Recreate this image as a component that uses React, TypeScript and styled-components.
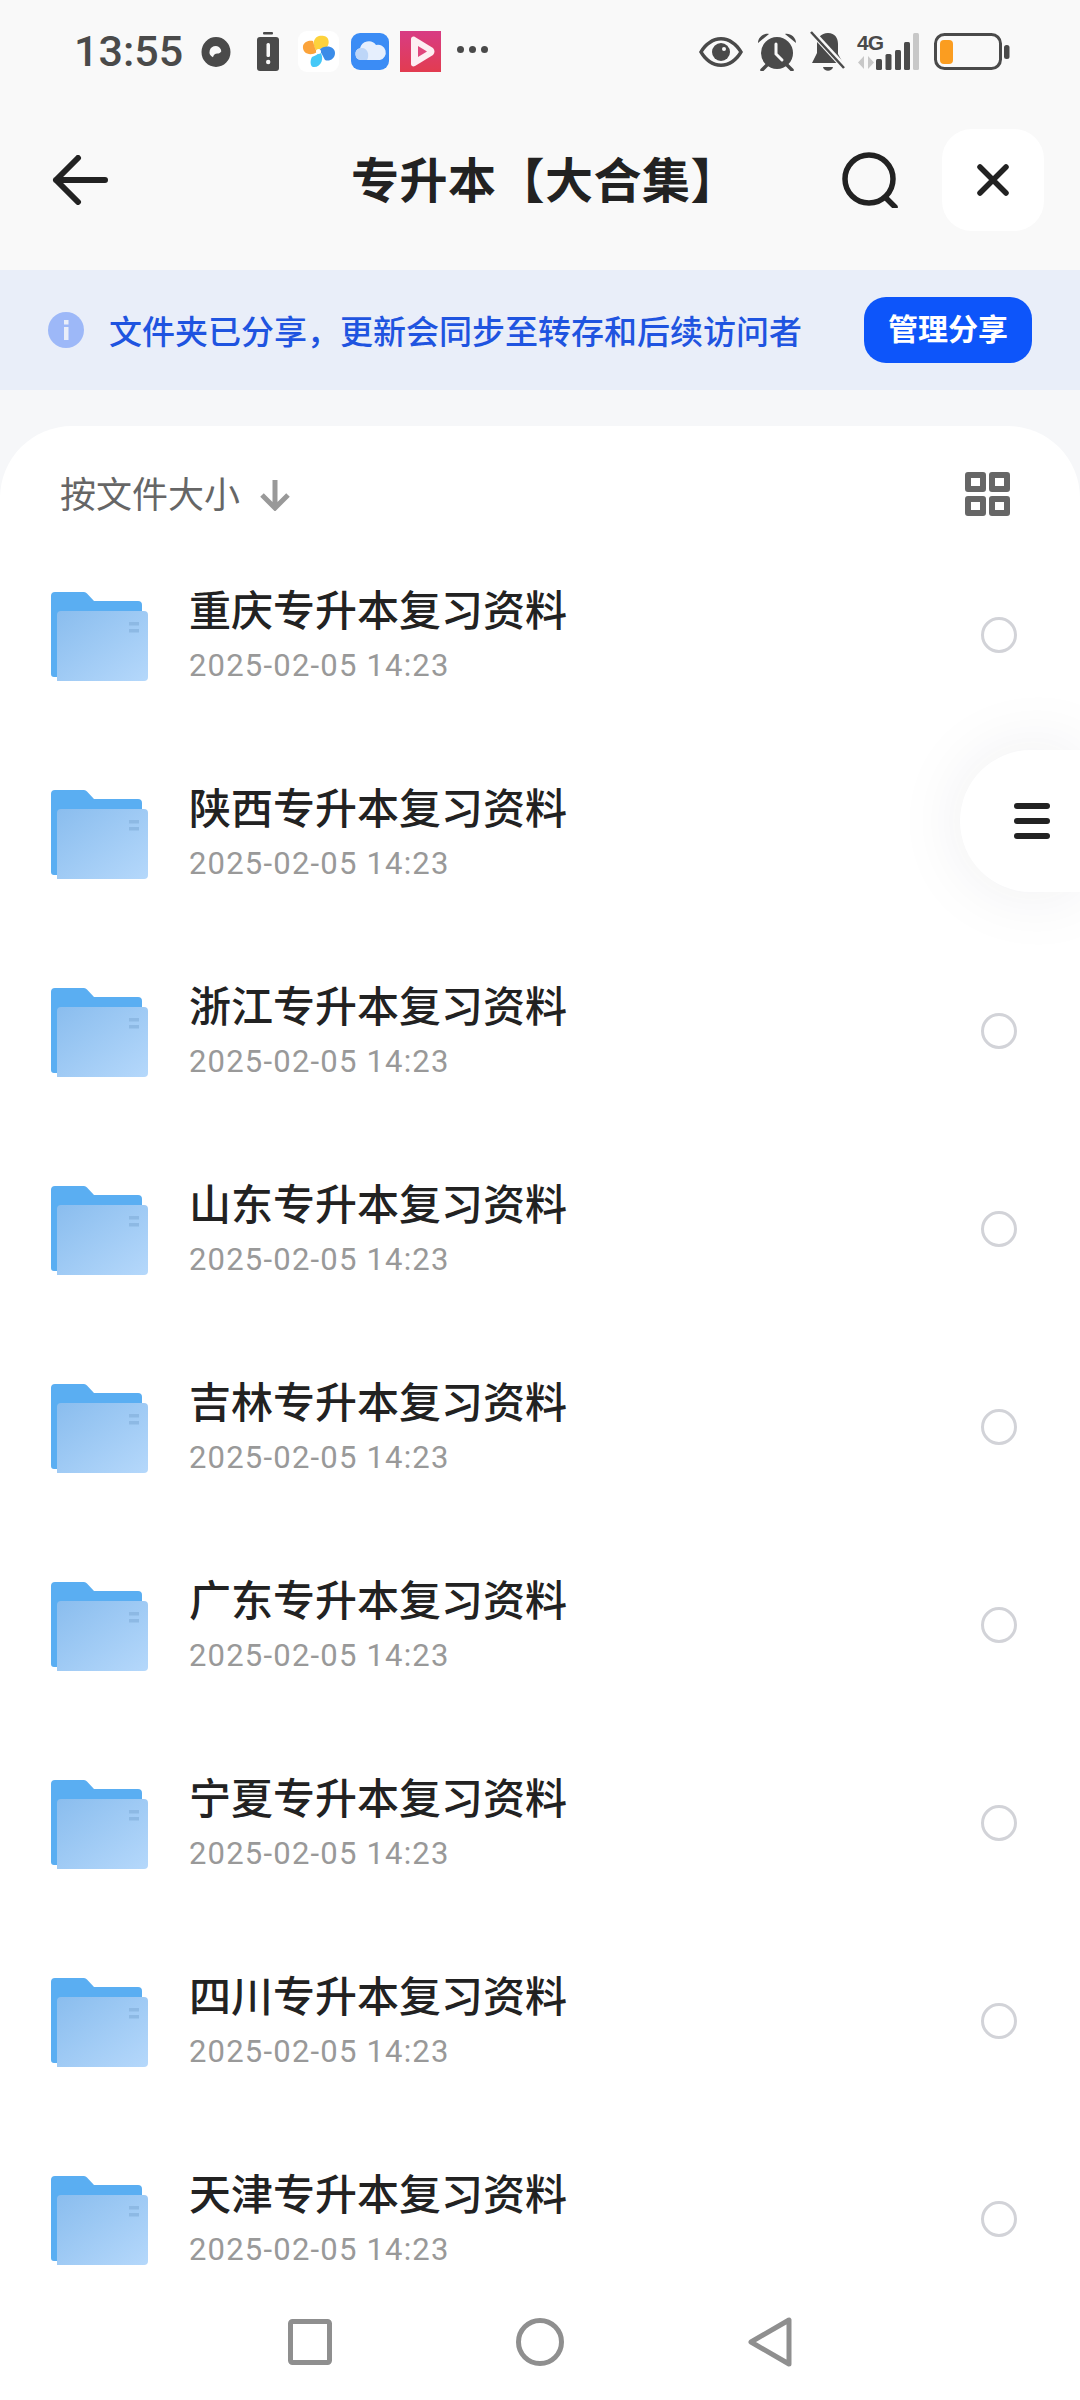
import React from "react";
import styled, { createGlobalStyle } from "styled-components";

const GlobalStyle = createGlobalStyle`
  html, body {
    margin: 0;
    padding: 0;
    background: #f9f9f9;
  }
  * {
    box-sizing: border-box;
  }
`;

const CJK = `"Noto Sans CJK SC", "Noto Sans", sans-serif`;

const provinces = ["重庆", "陕西", "浙江", "山东", "吉林", "广东", "宁夏", "四川", "天津"];

export default function App() {
  return (
    <Page>
      <GlobalStyle />
      <StatusBar>
        <StatusGroup>
          <Clock>13:55</Clock>
          <Glyph $width={30} $left={18}>
            <svg width="30" height="30" viewBox="0 0 30 30">
              <path fillRule="evenodd" fill="#4a4a4a" d="M15 0a14.500 15 0 1 1 0 30a14.500 15 0 1 1 0-30zM15 9a6.500 6 0 0 0-3 11.300c.4-2.500 2-3.800 4.500-3.800c1.500 0 3-.8 3.800-2.300A6.500 6 0 0 0 15 9z" />
            </svg>
          </Glyph>
          <Glyph $width={22} $left={26}>
            <svg width="22" height="39" viewBox="0 0 22 39">
              <rect x="6" y="0" width="10" height="2.500" rx="1" fill="#4a4a4a" />
              <rect x="0" y="5" width="22" height="34" rx="3" fill="#4a4a4a" />
              <rect x="9.500" y="11" width="3.500" height="14" rx="1.500" fill="#f9f9f9" />
              <circle cx="11.200" cy="30" r="2.200" fill="#f9f9f9" />
            </svg>
          </Glyph>
          <Glyph $width={41} $left={19}>
            <svg width="41" height="41" viewBox="0 0 41 41">
              <rect width="41" height="41" rx="9" fill="#ffffff" />
              <path d="M19 20C12 12 17 3 26 5c5 1 6 7 3 11c-3 1-7 1-10 4z" fill="#fdd23c" />
              <path d="M21 19c6-6 16-4 16 3c0 6-6 9-10 7c-2-3-3-7-6-10z" fill="#3b8ce8" />
              <path d="M22 21c5 6 1 16-7 15c-3-1-3-7-1-10c3-1 6-3 8-5z" fill="#45c8f7" />
              <path d="M19 21C12 26 4 22 5 15c1-5 7-6 10-5c1 4 2 8 4 11z" fill="#fba33a" />
              <circle cx="20.500" cy="20.500" r="2.500" fill="#ffffff" />
            </svg>
          </Glyph>
          <Glyph $width={38} $left={12}>
            <svg width="38" height="37" viewBox="0 0 38 37">
              <rect width="38" height="37" rx="9" fill="#3b8cf5" />
              <path d="M10 27a6 6 0 0 1-1-11.800A9 9 0 0 1 25 12a7.500 7.500 0 0 1 4 15z" fill="#e6effd" />
              <path d="M10 27a6 6 0 0 1-1-11.800c4-1 7 1 8 5c.5 3 0 5-1 6.800z" fill="#bdd6f8" />
            </svg>
          </Glyph>
          <Glyph $width={41} $left={11}>
            <svg width="41" height="41" viewBox="0 0 41 41">
              <defs>
                <linearGradient id="playBg" x1="0" y1="0" x2="0" y2="1">
                  <stop offset="0" stopColor="#d83c84" />
                  <stop offset="1" stopColor="#e23c50" />
                </linearGradient>
              </defs>
              <rect width="41" height="41" fill="url(#playBg)" />
              <path d="M11 8c0-2 2-3 4-2l18 11c2 2 2 5 0 7L15 35c-2 1-4 0-4-2z" fill="#fdeef2" />
              <path d="M18 15l9 5.500l-9 5.500z" fill="#e0457c" />
            </svg>
          </Glyph>
          <MoreDots>
            <i />
            <i />
            <i />
          </MoreDots>
        </StatusGroup>
        <StatusGroup>
          <Glyph $width={44} $left={0}>
            <svg width="44" height="30" viewBox="0 0 44 30">
              <path fillRule="evenodd" fill="#4a4a4a" d="M22 0c9 0 17 6 22 15c-5 9-13 15-22 15S5 24 0 15C5 6 13 0 22 0zm0 3.500c-7 0-13.500 4.500-18 11.500c4.500 7 11 11.500 18 11.500S35.500 22 40 15C35.500 8 29 3.500 22 3.500z" />
              <circle cx="22" cy="15" r="9" fill="#4a4a4a" />
              <circle cx="25" cy="12" r="2" fill="#f9f9f9" />
            </svg>
          </Glyph>
          <Glyph $width={38} $left={15}>
            <svg width="38" height="38" viewBox="0 0 38 38">
              <circle cx="19" cy="20" r="16" fill="#4a4a4a" />
              <path d="M0 10c0-6 6-10 11-9zM38 10c0-6-6-10-11-9z" fill="#4a4a4a" />
              <path d="M9 32l-5 5M29 32l5 5" stroke="#4a4a4a" strokeWidth="3.500" strokeLinecap="round" />
              <path d="M18 11v10l6 6" fill="none" stroke="#f9f9f9" strokeWidth="3" strokeLinecap="round" />
            </svg>
          </Glyph>
          <Glyph $width={36} $left={14}>
            <svg width="36" height="41" viewBox="0 0 36 41">
              <path d="M18 2c7 0 10 5 10 11v10l5 9H2l5-10V13C7 7 11 2 18 2z" fill="#4a4a4a" />
              <path d="M13 36h10c-1 5-9 5-10 0z" fill="#4a4a4a" />
              <path d="M1 0l34 37" stroke="#f9f9f9" strokeWidth="6" />
              <path d="M1 1l33 36" stroke="#4a4a4a" strokeWidth="2.500" />
            </svg>
          </Glyph>
          <NetworkIcon>
            <NetworkLabel>4G</NetworkLabel>
            <svg width="62" height="38" viewBox="0 0 62 38">
              <path d="M7 23v13l-6-6.500zM11 23l6 6.500l-6 6.500z" fill="#c8c8c8" />
              <rect x="19" y="26" width="6" height="11" rx="1.500" fill="#4a4a4a" />
              <rect x="28.500" y="21" width="6" height="16" rx="1.500" fill="#4a4a4a" />
              <rect x="38" y="17" width="6" height="20" rx="1.500" fill="#4a4a4a" />
              <rect x="47" y="9" width="6" height="28" rx="1.500" fill="#4a4a4a" />
              <rect x="56" y="0" width="6" height="37" rx="1.500" fill="#c8c8c8" />
            </svg>
          </NetworkIcon>
          <Glyph $width={76} $left={15}>
            <svg width="76" height="38" viewBox="0 0 76 38">
              <rect x="1.500" y="1.500" width="65" height="34" rx="9" fill="none" stroke="#4a4a4a" strokeWidth="3" />
              <rect x="6" y="7" width="13" height="24" rx="4" fill="#fb9d20" />
              <rect x="70" y="12" width="5.500" height="14" rx="2.500" fill="#4a4a4a" />
            </svg>
          </Glyph>
        </StatusGroup>
      </StatusBar>

      <Header>
        <BackButton>
          <svg width="56" height="50" viewBox="0 0 56 50" fill="none" stroke="#222222" strokeWidth="6" strokeLinecap="round" strokeLinejoin="round">
            <path d="M53 25H4M26 3L4 25l22 22" />
          </svg>
        </BackButton>
        <Title>专升本【大合集】</Title>
        <SearchButton>
          <svg width="56" height="56" viewBox="0 0 56 56" fill="none" stroke="#222222" strokeWidth="5.500" strokeLinecap="round">
            <circle cx="27" cy="27" r="24" />
            <path d="M44 46l9 9" />
          </svg>
        </SearchButton>
        <CloseButton>
          <svg width="32" height="32" viewBox="0 0 32 32" fill="none" stroke="#222222" strokeWidth="5.500" strokeLinecap="round">
            <path d="M3 3l26 26M29 3L3 29" />
          </svg>
        </CloseButton>
      </Header>

      <Banner>
        <InfoIcon>
          <svg width="36" height="36" viewBox="0 0 36 36">
            <circle cx="18" cy="18" r="18" fill="#9db8f8" />
            <rect x="16" y="8" width="4.500" height="4.500" fill="#e9eef9" />
            <rect x="16" y="15" width="4.500" height="13" fill="#e9eef9" />
          </svg>
        </InfoIcon>
        <BannerText>文件夹已分享，更新会同步至转存和后续访问者</BannerText>
        <ManageButton>管理分享</ManageButton>
      </Banner>

      <SheetArea>
        <Sheet>
          <SortBar>
            <SortLabel>按文件大小</SortLabel>
            <SortArrow>
              <svg width="30" height="32" viewBox="0 0 30 32" fill="none" stroke="#999999" strokeWidth="5">
                <path d="M15 1v28M2 16l13 13l13-13" />
              </svg>
            </SortArrow>
            <GridIcon>
              <svg width="45" height="44" viewBox="0 0 45 44" fill="none" stroke="#666666" strokeWidth="6" strokeLinejoin="round">
                <rect x="3" y="3" width="15" height="14" />
                <rect x="27" y="3" width="15" height="14" />
                <rect x="3" y="27" width="15" height="14" />
                <rect x="27" y="27" width="15" height="14" />
              </svg>
            </GridIcon>
          </SortBar>
          <FileList>
            {provinces.map((name, i) => (
              <FileRow key={name}>
                <svg width="98" height="90" viewBox="0 0 98 90">
                  <defs>
                    <linearGradient id={`folder${i}`} x1="0" y1="0" x2="1" y2="1">
                      <stop offset="0" stopColor="#8abdee" />
                      <stop offset="1" stopColor="#b5d8fb" />
                    </linearGradient>
                  </defs>
                  <path d="M1 5a4 4 0 0 1 4-4h29a4 4 0 0 1 3 1.500L44 10h44a4 4 0 0 1 4 4v72H4a3 3 0 0 1-3-3z" fill="#5aaef2" />
                  <path d="M7 24a4 4 0 0 1 4-4h83a4 4 0 0 1 4 4v62a4 4 0 0 1-4 4H7z" fill={`url(#folder${i})`} />
                  <rect x="79" y="31" width="10" height="3.500" fill="#8db9e4" />
                  <rect x="79" y="38" width="10" height="3.500" fill="#8db9e4" />
                </svg>
                <FileInfo>
                  <FileName>{name}专升本复习资料</FileName>
                  <FileDate>2025-02-05 14:23</FileDate>
                </FileInfo>
                <RadioMark />
              </FileRow>
            ))}
          </FileList>
          <FloatingMenu>
            <MenuLine />
            <MenuLine />
            <MenuLine />
          </FloatingMenu>
        </Sheet>
      </SheetArea>

      <NavBar>
        <svg width="44" height="46" viewBox="0 0 44 46" fill="none" stroke="#8f8f8f" strokeWidth="5" strokeLinejoin="round">
          <rect x="2.500" y="2.500" width="39" height="41" rx="2" />
        </svg>
        <svg width="48" height="48" viewBox="0 0 48 48" fill="none" stroke="#8f8f8f" strokeWidth="5">
          <circle cx="24" cy="24" r="21.500" />
        </svg>
        <svg width="44" height="50" viewBox="0 0 44 50" fill="none" stroke="#8f8f8f" strokeWidth="5" strokeLinejoin="round">
          <path d="M41 3v44L3 25z" />
        </svg>
      </NavBar>
    </Page>
  );
}

const Page = styled.div`
  width: 1080px;
  height: 2400px;
  display: flex;
  flex-direction: column;
  overflow: hidden;
  background: #f9f9f9;
  font-family: ${CJK};
`;

const StatusBar = styled.div`
  height: 129px;
  flex: none;
  display: flex;
  justify-content: space-between;
  align-items: flex-start;
  padding: 31px 70px 0 74px;
`;

const StatusGroup = styled.div`
  display: flex;
  align-items: center;
  height: 41px;
`;

const Clock = styled.span`
  font-family: Roboto, sans-serif;
  font-size: 43px;
  font-weight: 500;
  line-height: 41px;
  color: #4a4a4a;
`;

const Glyph = styled.span<{ $width: number; $left: number }>`
  display: flex;
  width: ${(p) => p.$width}px;
  margin-left: ${(p) => p.$left}px;
`;

const NetworkIcon = styled.span`
  display: flex;
  width: 62px;
  margin-left: 11px;
  position: relative;
`;

const NetworkLabel = styled.span`
  position: absolute;
  left: 0;
  top: 0;
  font-family: "Liberation Sans", sans-serif;
  font-size: 21px;
  font-weight: 700;
  line-height: 20px;
  letter-spacing: -1px;
  color: #4a4a4a;
`;

const MoreDots = styled.span`
  display: flex;
  gap: 5px;
  margin-left: 16px;
  margin-top: -4px;

  i {
    width: 7px;
    height: 7px;
    border-radius: 50%;
    background: #4a4a4a;
  }
`;

const Header = styled.div`
  height: 102px;
  flex: none;
  display: flex;
  align-items: center;
  position: relative;
  padding: 0 36px 0 52px;
`;

const BackButton = styled.div`
  display: flex;
`;

const Title = styled.div`
  position: absolute;
  left: 10px;
  right: 0;
  top: -3px;
  text-align: center;
  font-size: 48px;
  font-weight: 700;
  line-height: 102px;
  letter-spacing: 0.5px;
  color: #222222;
`;

const SearchButton = styled.div`
  display: flex;
  margin-left: auto;
  margin-right: 44px;
`;

const CloseButton = styled.div`
  width: 102px;
  height: 102px;
  display: flex;
  align-items: center;
  justify-content: center;
  border-radius: 30px;
  background: #ffffff;
  position: relative;
`;

const Banner = styled.div`
  height: 120px;
  flex: none;
  margin-top: 39px;
  display: flex;
  align-items: center;
  padding: 0 48px;
  background: #e9eef9;
`;

const InfoIcon = styled.div`
  display: flex;
  margin-right: 25px;
`;

const BannerText = styled.div`
  font-size: 33px;
  font-weight: 500;
  color: #1f54e0;
  white-space: nowrap;
`;

const ManageButton = styled.div`
  margin-left: auto;
  width: 168px;
  height: 66px;
  display: flex;
  align-items: center;
  justify-content: center;
  padding-bottom: 7px;
  border-radius: 22px;
  background: #0d55fa;
  color: #ffffff;
  font-size: 30px;
  font-weight: 700;
  white-space: nowrap;
`;

const SheetArea = styled.div`
  flex: 1;
  min-height: 0;
  display: flex;
  padding-top: 36px;
  background: #f6f7f9;
`;

const Sheet = styled.div`
  flex: 1;
  min-width: 0;
  display: flex;
  flex-direction: column;
  position: relative;
  overflow: hidden;
  border-radius: 72px 72px 0 0;
  background: #ffffff;
`;

const SortBar = styled.div`
  height: 110px;
  flex: none;
  display: flex;
  align-items: center;
  padding: 26px 70px 0 60px;
  color: #666666;
`;

const SortLabel = styled.span`
  font-size: 36px;
  line-height: 50px;
  margin-top: -4px;
`;

const SortArrow = styled.span`
  display: flex;
  margin-left: 20px;
  margin-top: 2px;
`;

const GridIcon = styled.span`
  display: flex;
  margin-left: auto;
`;

const FileList = styled.div`
  flex: 1;
  min-height: 0;
  overflow: hidden;
`;

const FileRow = styled.div`
  height: 198px;
  display: flex;
  align-items: center;
  padding: 0 63px 0 50px;

  & > svg {
    flex: none;
    margin-top: 2px;
  }
`;

const FileInfo = styled.div`
  flex: 1;
  margin-left: 41px;
  padding-top: 4px;
  display: flex;
  flex-direction: column;
`;

const FileName = styled.div`
  font-size: 42px;
  font-weight: 500;
  line-height: 54px;
  color: #222222;
`;

const FileDate = styled.div`
  margin-top: 4px;
  font-family: Roboto, sans-serif;
  font-size: 31px;
  line-height: 54px;
  color: #999999;
  letter-spacing: 1.2px;
`;

const RadioMark = styled.span`
  width: 36px;
  height: 36px;
  flex: none;
  border-radius: 50%;
  border: 3px solid #d2d3d8;
`;

const FloatingMenu = styled.div`
  position: absolute;
  right: 0;
  top: 324px;
  width: 120px;
  height: 142px;
  display: flex;
  flex-direction: column;
  justify-content: center;
  gap: 9px;
  padding-left: 54px;
  border-radius: 71px 0 0 71px;
  background: #ffffff;
  box-shadow: 0 0 70px rgba(40, 40, 60, 0.08);
`;

const MenuLine = styled.span`
  width: 36px;
  height: 6px;
  border-radius: 3px;
  background: #222222;
`;

const NavBar = styled.div`
  height: 120px;
  flex: none;
  display: flex;
  align-items: center;
  justify-content: center;
  gap: 184px;
  padding-top: 4px;
  background: #ffffff;
`;
